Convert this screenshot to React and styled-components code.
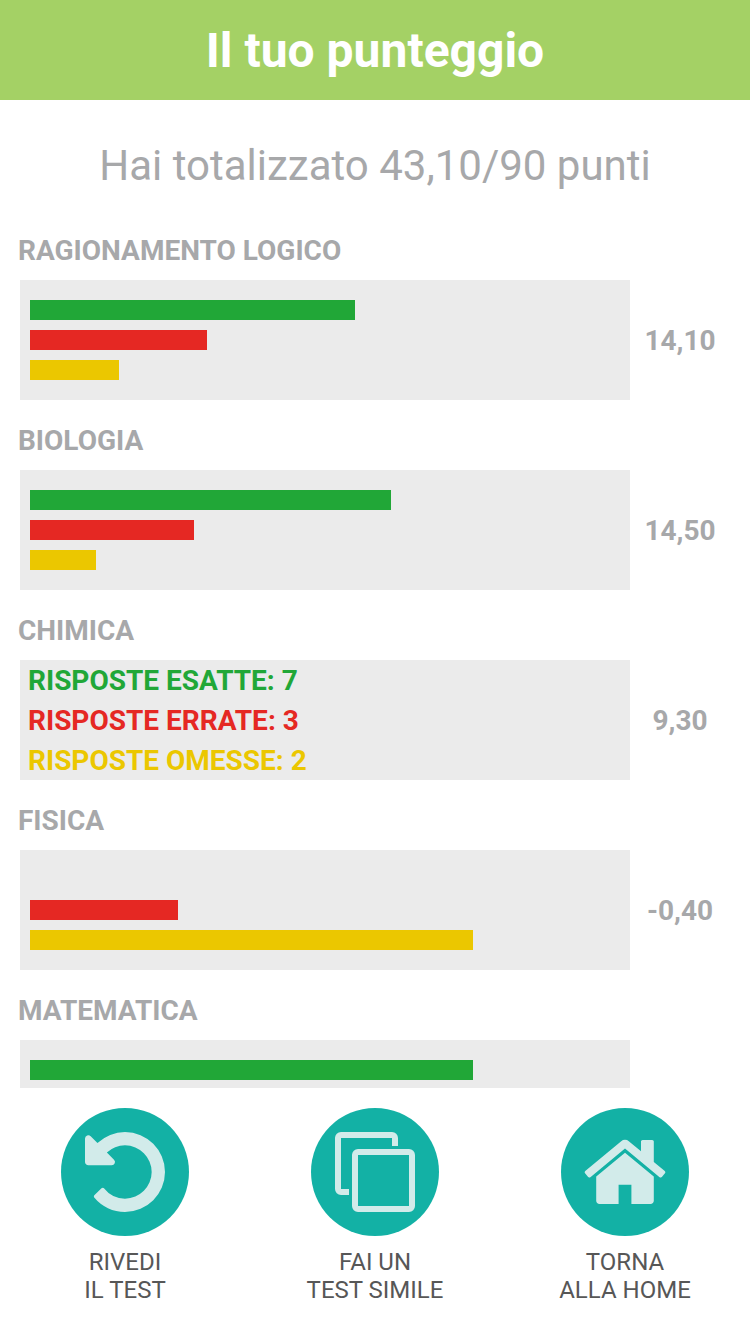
import {useState} from 'react';
import styled, {createGlobalStyle} from 'styled-components';

const GlobalStyle = createGlobalStyle`
  :root {
    --header-color: #a4d165;
    --main-color: #13b1a5;
    --icon-color: #d2ebea;
    --gray: #a7a8aa;
    --gray-light: #ebebeb;
    --gray-dark: #575757;
    --right: #21a737;
    --wrong: #e52823;
    --skipped: #ebc700;
  }

  * {
    box-sizing: border-box;
  }

  body {
    margin: 0;
    background-color: white;
    font-family: Roboto, 'Liberation Sans', sans-serif;
  }
`;

const Container = styled.div`
  display: flex;
  flex-direction: column;
  height: 100vh;
`;

const Header = styled.header`
  flex-shrink: 0;
  padding: 21px 20px 19px;
  background-color: var(--header-color);
  color: white;
  text-align: center;

  h1 {
    margin: 0;
    font-size: 48px;
    line-height: 60px;
    font-weight: 700;
  }
`;

const Total = styled.p`
  flex-shrink: 0;
  margin: 0;
  padding: 36px 20px 24px;
  color: var(--gray);
  font-size: 42px;
  line-height: 60px;
  text-align: center;
`;

const SubjectList = styled.main`
  flex: 1;
  min-height: 0;
  display: flex;
  flex-direction: column;
  gap: 10px;
  overflow-y: auto;
  scrollbar-width: none;
`;

const SubjectContainer = styled.section`
  flex-shrink: 0;
`;

const SubjectTitle = styled.h2`
  margin: 0;
  padding: 11px 18px 9px;
  color: var(--gray);
  font-size: 28px;
  line-height: 40px;
  font-weight: 700;
`;

const SubjectRow = styled.div`
  display: flex;
  align-items: center;
  padding: 0 20px;
`;

const Panel = styled.button`
  flex: 1;
  height: 120px;
  padding: ${(p) => (p.$open ? '2px 8px 0' : '0 10px')};
  display: flex;
  flex-direction: column;
  justify-content: center;
  gap: ${(p) => (p.$open ? '0' : '10px')};
  border: none;
  background-color: var(--gray-light);
  font-family: inherit;
  text-align: left;
  cursor: pointer;
`;

const Bar = styled.span`
  display: block;
  height: 20px;
  background-color: var(--${(p) => p.$type});
`;

const Answer = styled.span`
  color: var(--${(p) => p.$type});
  font-size: 28px;
  line-height: 40px;
  font-weight: 700;
`;

const Score = styled.div`
  width: 100px;
  padding-top: 2px;
  color: var(--gray);
  font-size: 28px;
  line-height: 40px;
  font-weight: 700;
  text-align: center;
`;

const Footer = styled.footer`
  flex-shrink: 0;
  display: grid;
  grid-template-columns: repeat(3, 1fr);
  padding: 20px 0 30px;
`;

const ActionButton = styled.button`
  display: flex;
  flex-direction: column;
  align-items: center;
  gap: 12px;
  padding: 0;
  border: none;
  background: none;
  color: var(--gray-dark);
  font-family: inherit;
  font-size: 24px;
  line-height: 28px;
  text-align: center;
  cursor: pointer;
`;

const Circle = styled.svg`
  width: 128px;
  height: 128px;
  border-radius: 50%;
  background-color: var(--main-color);
  color: var(--icon-color);
`;

const TYPES = [
  {type: 'right', label: 'RISPOSTE ESATTE'},
  {type: 'wrong', label: 'RISPOSTE ERRATE'},
  {type: 'skipped', label: 'RISPOSTE OMESSE'},
];

const SUBJECTS = [
  {name: 'RAGIONAMENTO LOGICO', score: '14,10', right: 11, wrong: 6, skipped: 3},
  {name: 'BIOLOGIA', score: '14,50', right: 11, wrong: 5, skipped: 2},
  {name: 'CHIMICA', score: '9,30', right: 7, wrong: 3, skipped: 2},
  {name: 'FISICA', score: '-0,40', right: 0, wrong: 1, skipped: 3},
  {name: 'MATEMATICA', score: '5,60', right: 6, wrong: 1, skipped: 1},
];

const UndoIcon = () => (
  <Circle viewBox="0 0 128 128" aria-hidden="true">
    <path
      fill="currentColor"
      transform="translate(24 17.333) scale(0.052083)"
      d="M1536 896q0 156-61 298t-164 245-245 164-298 61q-172 0-327-72.5t-264-204.5q-7-10-6.5-22.5t8.500-20.500l137-138q10-9 25-9 16 2 23 12 73 95 179 147t225 52q104 0 198.500-40.500t163.500-109.500 109.500-163.500 40.500-198.500-40.500-198.500-109.500-163.500-163.500-109.500-198.500-40.500q-98 0-188 35.500t-160 101.500l137 138q31 30 14 69-17 40-59 40h-448q-26 0-45-19t-19-45v-448q0-42 40-59 39-17 69 14l130 129q107-101 244.500-156.500t284.500-55.500q156 0 298 61t245 164 164 245 61 298z"
    />
  </Circle>
);

const CopyIcon = () => (
  <Circle
    viewBox="0 0 128 128"
    fill="none"
    stroke="currentColor"
    strokeWidth="6"
    aria-hidden="true"
  >
    <path d="M84 38V30a3 3 0 0 0-3-3H30a3 3 0 0 0-3 3v51a3 3 0 0 0 3 3h8" />
    <rect x="44" y="44" width="57" height="57" rx="3" />
  </Circle>
);

const HomeIcon = () => (
  <Circle viewBox="0 0 128 128" aria-hidden="true">
    <path
      fill="currentColor"
      transform="translate(19.2 19.2) scale(0.05)"
      d="M1472 992v480q0 26-19 45t-45 19h-384v-384h-256v384h-384q-26 0-45-19t-19-45v-480q0-1 .5-3t.5-3l575-474 575 474q1 2 1 6zm223-69l-62 74q-8 9-21 11h-3q-13 0-21-7l-692-577-692 577q-12 8-24 7-13-2-21-11l-62-74q-8-10-7-23.500t11-21.500l719-599q32-26 76-26t76 26l244 204v-195q0-14 9-23t23-9h192q14 0 23 9t9 23v408l219 182q10 8 11 21.500t-7 23.500z"
    />
  </Circle>
);

const Subject = ({subject, isOpen, onToggle}) => {
  const total = subject.right + subject.wrong + subject.skipped;

  return (
    <SubjectContainer>
      <SubjectTitle>{subject.name}</SubjectTitle>
      <SubjectRow>
        <Panel
          type="button"
          $open={isOpen}
          aria-label={isOpen ? undefined : subject.name}
          aria-expanded={isOpen}
          onClick={onToggle}
        >
          {TYPES.map(({type, label}) =>
            isOpen ? (
              <Answer key={type} $type={type}>
                {label}: {subject[type]}
              </Answer>
            ) : (
              <Bar
                key={type}
                $type={type}
                style={{width: `${(subject[type] / total) * 100}%`}}
              />
            )
          )}
        </Panel>
        <Score>{subject.score}</Score>
      </SubjectRow>
    </SubjectContainer>
  );
};

const App = () => {
  const [opened, setOpened] = useState('CHIMICA');

  const toggleHandler = (name) => {
    setOpened((pre) => (pre === name ? '' : name));
  };

  return (
    <>
      <GlobalStyle />
      <Container>
        <Header>
          <h1>Il tuo punteggio</h1>
        </Header>
        <Total>Hai totalizzato 43,10/90 punti</Total>
        <SubjectList>
          {SUBJECTS.map((subject) => (
            <Subject
              key={subject.name}
              subject={subject}
              isOpen={opened === subject.name}
              onToggle={() => toggleHandler(subject.name)}
            />
          ))}
        </SubjectList>
        <Footer>
          <ActionButton type="button">
            <UndoIcon />
            <span>
              RIVEDI
              <br />
              IL TEST
            </span>
          </ActionButton>
          <ActionButton type="button">
            <CopyIcon />
            <span>
              FAI UN
              <br />
              TEST SIMILE
            </span>
          </ActionButton>
          <ActionButton type="button">
            <HomeIcon />
            <span>
              TORNA
              <br />
              ALLA HOME
            </span>
          </ActionButton>
        </Footer>
      </Container>
    </>
  );
};

export default App;
